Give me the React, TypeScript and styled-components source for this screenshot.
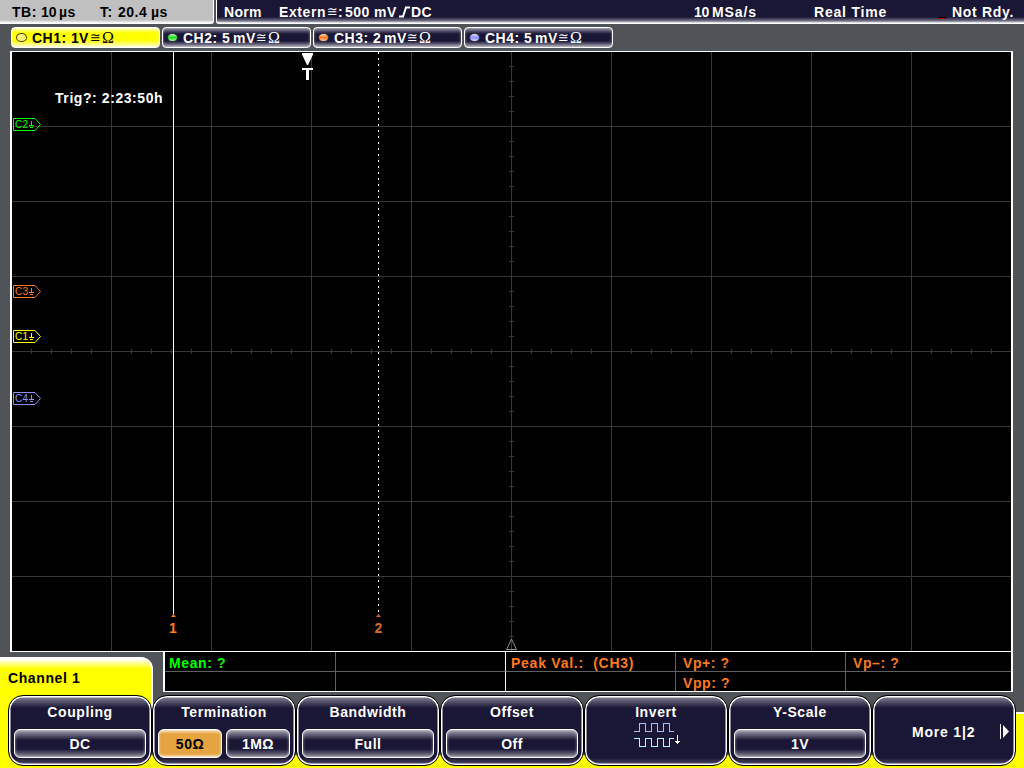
import React, { FunctionComponent, ReactNode } from 'react'
import styled, { createGlobalStyle } from 'styled-components'

const Theme = {
    CHASSIS: '#505458',
    NAVY: '#1a1635',
    SILVER: '#c0c0c0',
    GRID: '#383838',
    CELL: '#606064',
    YELLOW: '#ffff00',
    GREEN: '#00ff00',
    ORANGE: '#ff7820',
    VIOLET: '#9090ff',
    SELECTED: '#e6a440',
}

const GlobalStyle = createGlobalStyle`
    * {
        box-sizing: border-box;
    }

    body {
        margin: 0;
        overflow: hidden;
        background: ${Theme.CHASSIS};
    }
`

const Screen = styled.div`
    display: flex;
    flex-direction: column;
    width: 1024px;
    height: 768px;
    overflow: hidden;
    background: ${Theme.CHASSIS};
    color: #fff;
    font: bold 14px/16px 'Liberation Sans', Arial, sans-serif;
    letter-spacing: 0.6px;
    white-space: pre;
`

const StatusBar = styled.div`
    display: flex;
    gap: 2px;
    height: 24px;
`

const TimebasePanel = styled.div`
    display: flex;
    width: 214px;
    padding: 4px 0 0 12px;
    color: #000;
    background: linear-gradient(${Theme.SILVER} 20px, #fff);
    border-right: 1px solid #fff;
    border-bottom: 1px solid #fff;
    border-bottom-right-radius: 3px;
`

const TriggerPanel = styled.div`
    display: flex;
    flex: 1;
    padding: 4px 0 0 7px;
    background: linear-gradient(${Theme.NAVY} 17px, #77758a 21px, #fff);
    border-left: 1px solid #fff;
    border-bottom: 1px solid #fff;
    border-bottom-left-radius: 3px;
`

const Field = styled.span<{ $width: number; $spacing?: number }>`
    flex: none;
    width: ${({ $width }) => $width}px;
    letter-spacing: ${({ $spacing = 0.5 }) => $spacing}px;
`

const StatusLamp = styled.span`
    width: 8px;
    height: 2px;
    margin: 13px 6px 0 0;
    background: #b00000;
    border-top: 1px solid #000;
`

const ChannelBar = styled.div`
    display: flex;
    flex: none;
    gap: 2px;
    height: 27px;
    padding: 3px 11px 3px;
`

const ChannelButton = styled.div<{ $active?: boolean }>`
    display: flex;
    align-items: center;
    width: 149px;
    height: 21px;
    padding-left: 4px;
    border: 1px solid #fff;
    border-radius: 4px;
    color: ${({ $active }) => ($active ? '#000' : '#fff')};
    background: ${({ $active }) =>
        $active
            ? 'linear-gradient(#ffffc0, #ffff00 5px, #ffff00 12px, #ffffd0)'
            : `linear-gradient(#8c8a9c, ${Theme.NAVY} 6px, ${Theme.NAVY} 13px, #a9a7b6)`};
    box-shadow: inset 0 0 3px rgba(255, 255, 255, 0.5);
`

const Led = styled.span<{ $color: string; $active?: boolean }>`
    width: 11px;
    height: 9px;
    margin-right: 5px;
    border: 1px solid ${({ $active }) => ($active ? '#444400' : '#33333f')};
    border-radius: 50%;
    background: ${({ $color, $active }) =>
        $active
            ? $color
            : `linear-gradient(#fff -10%, ${$color} 45%, ${$color} 55%, #fff 120%)`};
`

const Congruent = styled.span`
    width: 10px;
    font: 13px/15px 'DejaVu Sans', sans-serif;
    letter-spacing: 0;
    text-indent: -1px;
`

const Ohm = styled.span`
    padding-left: 1px;
    font: 16px/16px 'Liberation Serif', serif;
    letter-spacing: 0;
`

const Plot = styled.div`
    flex: none;
    width: 1003px;
    height: 601px;
    margin-left: 10px;
    background: #000;
    border: solid #fff;
    border-width: 1px 2px;
`

const PlotDrawing = styled.svg`
    display: block;
    width: 999px;
    height: 599px;
`

const ResultRow = styled.div`
    display: flex;
    flex: none;
    align-items: flex-end;
    height: 40px;
`

const ChannelTab = styled.div`
    width: 153px;
    height: 35px;
    margin-right: 10px;
    padding: 13px 8px 0;
    color: #000;
    background: linear-gradient(#fff 2px, ${Theme.YELLOW} 12px);
    border-right: 2px solid #fff;
    border-top-right-radius: 12px;
`

const ResultTable = styled.div`
    display: grid;
    grid-template-columns: 170px 170px 170px 170px 1fr;
    grid-template-rows: 20px 19px;
    width: 850px;
    height: 40px;
    background: #000;
    border: solid #fff;
    border-width: 0 2px 1px;
`

const ResultCell = styled.div<{ $color?: string; $divider?: string }>`
    padding: 3px 0 0 ${({ $divider }) => ($divider === '#fff' ? 5 : 7)}px;
    color: ${({ $color }) => $color};
    border-left: ${({ $divider = Theme.CELL }) =>
        $divider === 'none' ? 'none' : `1px solid ${$divider}`};
    border-bottom: 1px solid ${Theme.CELL};

    &:first-child {
        padding-left: 4px;
    }

    &:nth-child(3) {
        letter-spacing: 0.75px;
    }

    &:nth-child(n + 6) {
        border-bottom: none;
    }
`

const SoftkeyBar = styled.div`
    display: flex;
    flex: none;
    height: 76px;
    padding: 3px 8px 0;
    background:
        linear-gradient(${Theme.YELLOW}, ${Theme.YELLOW}) 0 0 / 151px 76px no-repeat,
        linear-gradient(#fff, #fff) 151px 0 / 2px 18px no-repeat,
        linear-gradient(#fff 2px, ${Theme.YELLOW} 2px) 1010px 20px / 14px 56px no-repeat,
        linear-gradient(${Theme.YELLOW}, ${Theme.YELLOW}) 0 63px / 1024px 13px no-repeat;
`

const Softkey = styled.div`
    display: flex;
    flex-direction: column;
    align-items: center;
    width: 144px;
    height: 71px;
    padding: 7px 4px 0;
    border: 1px solid #000;
    border-radius: 15px;
    background: linear-gradient(#8a889a, ${Theme.NAVY} 12px, ${Theme.NAVY} 62px, #555269) padding-box;
    box-shadow: inset 0 0 0 1.5px #fff;
`

const SoftkeyTitle = styled.div`
    height: 26px;
    padding-top: 1px;
`

const ValueRow = styled.div`
    display: flex;
    gap: 4px;
    width: 132px;
`

const ValueButton = styled.div<{ $selected?: boolean }>`
    flex: 1;
    height: 29px;
    padding-top: 6px;
    text-align: center;
    letter-spacing: 0.5px;
    border: 1px solid #fff;
    border-radius: 6px;
    color: ${({ $selected }) => ($selected ? '#000' : '#fff')};
    background: ${({ $selected }) =>
        $selected
            ? `linear-gradient(#f5dcb5, ${Theme.SELECTED} 4px, ${Theme.SELECTED} 24px, #f5dcb5)`
            : `linear-gradient(#a5a3b2, ${Theme.NAVY} 10px, ${Theme.NAVY} 19px, #8a889a)`};
    box-shadow: inset 0 0 3px rgba(255, 255, 255, 0.6);
`

const MoreContent = styled.div`
    display: flex;
    align-items: center;
    width: 100%;
    height: 57px;
    padding: 0 1px 0 35px;
    letter-spacing: 0.8px;
`

const MoreArrow = styled.svg`
    width: 10px;
    height: 16px;
    margin: -1px 0 0 auto;
`

const InvertIcon = styled.svg`
    flex: none;
    width: 48px;
    height: 28px;
    margin: -8px 0 0 2px;
`

const PlotText = styled.text`
    font: bold 14px 'Liberation Sans', Arial, sans-serif;
    letter-spacing: 0.4px;
`

const MarkerText = styled.text`
    font: 10px 'Liberation Sans', Arial, sans-serif;
    letter-spacing: 0;
`

const channels = [
    { name: 'CH1:', scale: '1', unit: 'V', color: '#fff27a', active: true },
    { name: 'CH2:', scale: '5', unit: 'mV', color: '#20e020' },
    { name: 'CH3:', scale: '2', unit: 'mV', color: Theme.ORANGE },
    { name: 'CH4:', scale: '5', unit: 'mV', color: Theme.VIOLET },
]

const markers = [
    { name: 'C2', y: 124, color: Theme.GREEN },
    { name: 'C3', y: 291, color: Theme.ORANGE },
    { name: 'C1', y: 336, color: Theme.YELLOW },
    { name: 'C4', y: 398, color: Theme.VIOLET },
]

const range = (from: number, to: number, step: number) => {
    const values: number[] = []
    for (let v = from; v <= to; v += step) values.push(v)
    return values
}

const Grid: FunctionComponent = () => (
    <g fill={Theme.GRID} shapeRendering="crispEdges">
        {range(111, 911, 100).map((x) => (
            <rect key={x} x={x} y={52} width={1} height={599} />
        ))}
        {range(126, 576, 75).map((y) => (
            <rect key={y} x={12} y={y} width={999} height={1} />
        ))}
        {range(31, 991, 20).map((x) => (
            <rect key={x} x={x} y={349} width={1} height={5} />
        ))}
        {range(66, 636, 15).map((y) => (
            <rect key={y} x={509} y={y} width={5} height={1} />
        ))}
    </g>
)

const ChannelMarker: FunctionComponent<{ name: string; y: number; color: string }> = ({
    name,
    y,
    color,
}) => (
    <g>
        <path
            d={`M35 ${y - 5.5}H13.5V${y + 6.5}H35L40.5 ${y + 0.5}Z`}
            fill="none"
            stroke={color}
        />
        <MarkerText x={15} y={y + 4} fill={color} textLength={13}>
            {name}
        </MarkerText>
        <path
            d={`M31.5 ${y - 3}V${y + 1}M29 ${y + 1.5}H34M30 ${y + 3.5}H33`}
            stroke={color}
            shapeRendering="crispEdges"
        />
    </g>
)

const Waveforms: FunctionComponent = () => (
    <Plot>
        <PlotDrawing viewBox="12 52 999 599">
            <Grid />
            <rect x={173} y={52} width={1} height={562} fill="#fff" />
            <path
                d="M378.5 52V613"
                stroke="#fff"
                strokeDasharray="2 4"
                shapeRendering="crispEdges"
            />
            <path d="M171 617L173.5 614L176 617Z" fill={Theme.ORANGE} />
            <path d="M376 617L378.5 614L381 617Z" fill="#d86820" />
            <PlotText x={169} y={633} fill={Theme.ORANGE}>
                1
            </PlotText>
            <PlotText x={374.5} y={633} fill="#d86820">
                2
            </PlotText>
            <path d="M302 53H313V54.5L308 65H307L302 54.5Z" fill="#fff" />
            <path d="M302 68H313V70H309V80H306V70H302Z" fill="#fff" />
            <path d="M506.5 649.5H516.5L511.5 639Z" fill="none" stroke="#909090" />
            <PlotText x={55} y={103} fill="#fff" textLength={108}>
                Trig?: 2:23:50h
            </PlotText>
            {markers.map((marker) => (
                <ChannelMarker key={marker.name} {...marker} />
            ))}
        </PlotDrawing>
    </Plot>
)

const Status: FunctionComponent = () => (
    <StatusBar>
        <TimebasePanel>
            <Field $width={29}>TB:</Field>
            <Field $width={18} $spacing={0}>10</Field>
            <Field $width={41}>µs</Field>
            <Field $width={18}>T:</Field>
            <Field $width={33}>20.4</Field>
            <Field $width={20}>µs</Field>
        </TimebasePanel>
        <TriggerPanel>
            <Field $width={55} $spacing={0.3}>Norm</Field>
            <Field $width={49} $spacing={0.6}>Extern</Field>
            <Congruent>≅</Congruent>
            <Field $width={7}>:</Field>
            <Field $width={29}>500</Field>
            <Field $width={24}>mV</Field>
            <svg width="13" height="16" viewBox="0 0 13 16">
                <path d="M1 12.5H5L8 3.5H12" fill="none" stroke="#fff" strokeWidth="2" />
            </svg>
            <Field $width={283}>DC</Field>
            <Field $width={18} $spacing={-0.2}>10</Field>
            <Field $width={102} $spacing={0.9}>MSa/s</Field>
            <Field $width={124} $spacing={0.8}>Real Time</Field>
            <StatusLamp />
            <Field $width={68} $spacing={0.7}>Not Rdy.</Field>
        </TriggerPanel>
    </StatusBar>
)

const Channels: FunctionComponent = () => (
    <ChannelBar>
        {channels.map(({ name, scale, unit, color, active }) => (
            <ChannelButton key={name} $active={active}>
                <Led $color={color} $active={active} />
                <Field $width={39}>{name}</Field>
                <Field $width={active ? 8 : 11}>{scale}</Field>
                <Field $width={active ? 12 : 24}>{unit}</Field>
                <Congruent>≅</Congruent>
                <Ohm>Ω</Ohm>
            </ChannelButton>
        ))}
    </ChannelBar>
)

const Results: FunctionComponent = () => (
    <ResultRow>
        <ChannelTab>Channel 1</ChannelTab>
        <ResultTable>
            <ResultCell $color={Theme.GREEN} $divider="none">Mean: ?</ResultCell>
            <ResultCell />
            <ResultCell $color={Theme.ORANGE} $divider="#fff">Peak Val.:  (CH3)</ResultCell>
            <ResultCell $color={Theme.ORANGE}>Vp+: ?</ResultCell>
            <ResultCell $color={Theme.ORANGE}>Vp–: ?</ResultCell>
            <ResultCell $divider="none" />
            <ResultCell />
            <ResultCell $divider="#fff" />
            <ResultCell $color={Theme.ORANGE}>Vpp: ?</ResultCell>
            <ResultCell />
        </ResultTable>
    </ResultRow>
)

const ValueSoftkey: FunctionComponent<{ title: string; children: ReactNode }> = ({
    title,
    children,
}) => (
    <Softkey>
        <SoftkeyTitle>{title}</SoftkeyTitle>
        <ValueRow>{children}</ValueRow>
    </Softkey>
)

const Softkeys: FunctionComponent = () => (
    <SoftkeyBar>
        <ValueSoftkey title="Coupling">
            <ValueButton>DC</ValueButton>
        </ValueSoftkey>
        <ValueSoftkey title="Termination">
            <ValueButton $selected>50Ω</ValueButton>
            <ValueButton>1MΩ</ValueButton>
        </ValueSoftkey>
        <ValueSoftkey title="Bandwidth">
            <ValueButton>Full</ValueButton>
        </ValueSoftkey>
        <ValueSoftkey title="Offset">
            <ValueButton>Off</ValueButton>
        </ValueSoftkey>
        <Softkey>
            <SoftkeyTitle>Invert</SoftkeyTitle>
            <InvertIcon viewBox="0 0 48 28" fill="none" shapeRendering="crispEdges">
                <path
                    d="M1 10.5H6.5V2.5H12.5V10.5H18.5V2.5H24.5V10.5H30.5V2.5H36.5V10.5H41"
                    stroke="#a8c0f0"
                />
                <path
                    d="M1 17.5H6.5V25.5H12.5V17.5H18.5V25.5H24.5V17.5H30.5V25.5H36.5V17.5H41"
                    stroke="#b8f4ff"
                />
                <path d="M44.5 14V23M42 20.5H47M43 21.5H46" stroke="#fff" />
            </InvertIcon>
        </Softkey>
        <ValueSoftkey title="Y-Scale">
            <ValueButton>1V</ValueButton>
        </ValueSoftkey>
        <Softkey>
            <MoreContent>
                More 1|2
                <MoreArrow viewBox="0 0 10 16" fill="#fff">
                    <path d="M0 1H1V16H0ZM3 2L9 8.5L3 15Z" />
                </MoreArrow>
            </MoreContent>
        </Softkey>
    </SoftkeyBar>
)

const App: FunctionComponent = () => (
    <Screen>
        <GlobalStyle />
        <Status />
        <Channels />
        <Waveforms />
        <Results />
        <Softkeys />
    </Screen>
)

export default App
